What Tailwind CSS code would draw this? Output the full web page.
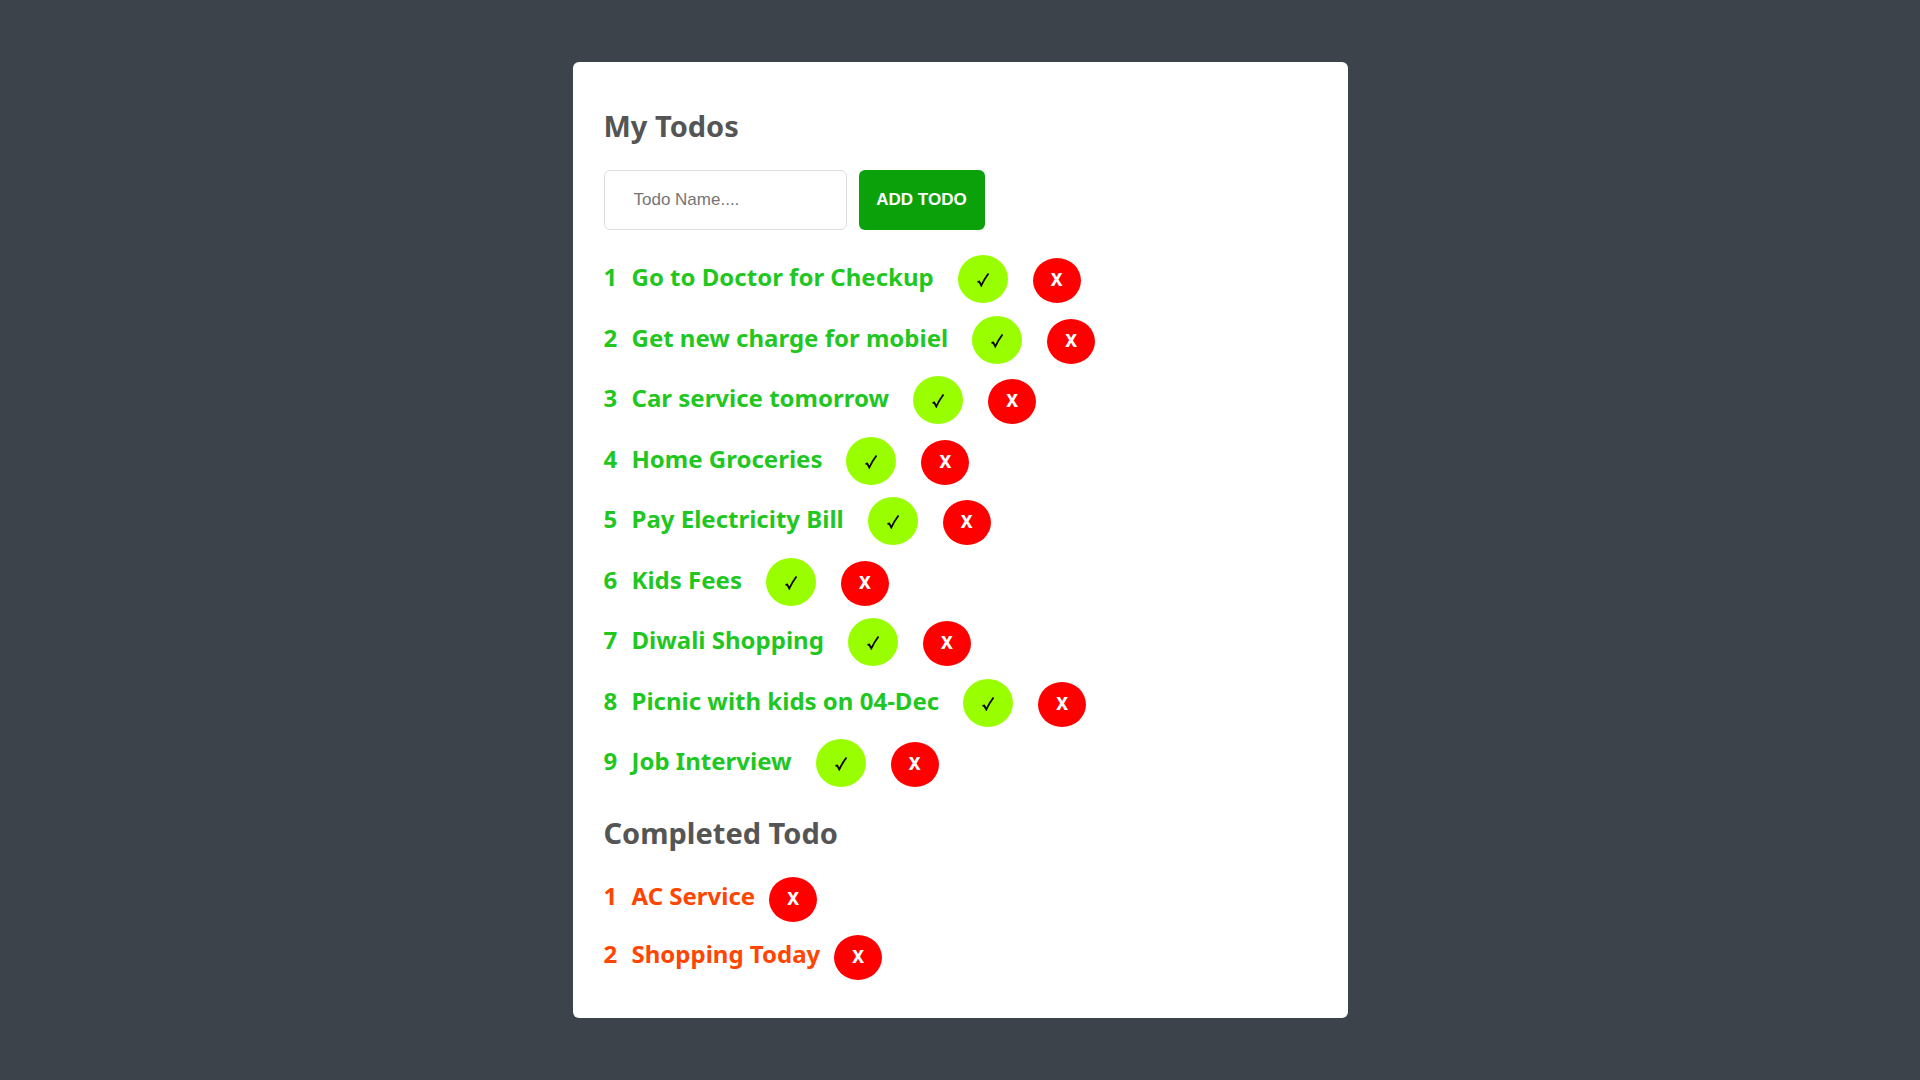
<!DOCTYPE html>
<html lang="en">
<head>
<meta charset="utf-8">
<title>My Todos</title>
<script src="https://cdn.jsdelivr.net/npm/@tailwindcss/browser@4"></script>
</head>
<body class="min-h-screen bg-[#3c434b] px-4 py-[62px] font-['Noto_Sans','Open_Sans',sans-serif]">
<main class="mx-auto max-w-[775px] rounded-md bg-white px-[31px] pt-[42px] pb-[38px]">
  <h1 class="text-[29px] leading-[44px] font-bold text-[#555]">My Todos</h1>
  <form class="mt-[22px] flex gap-3 font-['Liberation_Sans',Arial,sans-serif] text-[17px]">
    <input type="text" aria-label="Todo name" placeholder="Todo Name...." class="h-[60px] w-[243px] rounded-md border border-[#ddd] px-[29px] placeholder:text-[#757575]">
    <button type="button" class="h-[60px] w-[126px] rounded-md bg-[#0aa10a] font-bold text-white">ADD TODO</button>
  </form>
  <ul id="todos" class="mt-[25px] grid gap-3 text-2xl leading-[44px] font-bold text-[#1fc71f]"></ul>
  <h2 class="mt-[23px] text-[29px] leading-[44px] font-bold text-[#555]">Completed Todo</h2>
  <ul id="completed" class="mt-[22px] grid gap-[13px] text-2xl leading-[38px] font-bold text-[#ff4500]"></ul>
</main>
<script>
const todos = ['Go to Doctor for Checkup','Get new charge for mobiel','Car service tomorrow','Home Groceries','Pay Electricity Bill','Kids Fees','Diwali Shopping','Picnic with kids on 04-Dec','Job Interview'];
const completed = ['AC Service','Shopping Today'];
const remove = t => `<button type="button" aria-label="Remove ${t}" class="h-[45px] w-12 shrink-0 rounded-[50%] bg-[#f00] pb-0.5 text-[17px] leading-5 font-extrabold text-white">X</button>`;
document.getElementById('todos').innerHTML = todos.map((t, i) => `
<li class="flex h-12 items-end odd:mb-px">
  <span class="w-7 self-start">${i + 1}</span><span class="mr-6 self-start">${t}</span>
  <button type="button" aria-label="Complete ${t}" class="mr-[25px] flex h-12 w-[50px] shrink-0 items-center justify-center rounded-[50%] bg-[#9f0]">
    <svg class="h-4 w-4" viewBox="0 0 16 16" fill="none" stroke="#000" stroke-width="1.8"><path d="M2.5 10.8 4.200 10.500 6.300 14.500Q9 8.500 13.500 2.500"/></svg>
  </button>
  ${remove(t)}
</li>`).join('');
document.getElementById('completed').innerHTML = completed.map((t, i) => `
<li class="flex h-[45px] items-end">
  <span class="w-7 self-start">${i + 1}</span><span class="mr-3.5 self-start">${t}</span>
  ${remove(t)}
</li>`).join('');
</script>
</body>
</html>
